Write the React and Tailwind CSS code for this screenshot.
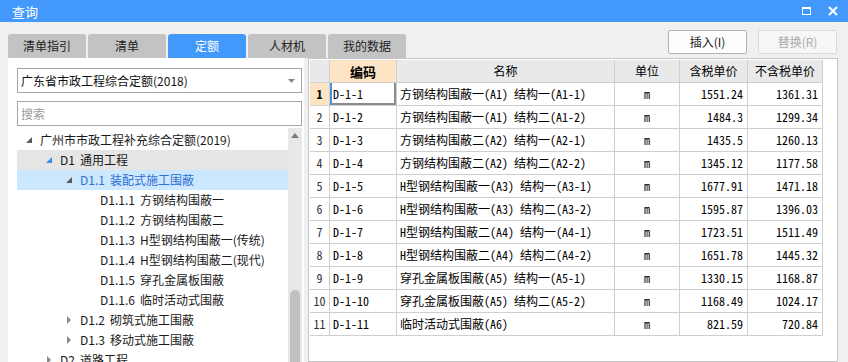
import React from 'react';

const treeItems = [
  { level: 0, arrow: 'open', label: '广州市市政工程补充综合定额(2019)' },
  { level: 1, arrow: 'open', code: 'D1', label: '通用工程', hover: true },
  { level: 2, arrow: 'open', code: 'D1.1', label: '装配式施工围蔽', selected: true },
  { level: 3, code: 'D1.1.1', label: '方钢结构围蔽一' },
  { level: 3, code: 'D1.1.2', label: '方钢结构围蔽二' },
  { level: 3, code: 'D1.1.3', label: 'H型钢结构围蔽一(传统)' },
  { level: 3, code: 'D1.1.4', label: 'H型钢结构围蔽二(现代)' },
  { level: 3, code: 'D1.1.5', label: '穿孔金属板围蔽' },
  { level: 3, code: 'D1.1.6', label: '临时活动式围蔽' },
  { level: 2, arrow: 'closed', code: 'D1.2', label: '砌筑式施工围蔽' },
  { level: 2, arrow: 'closed', code: 'D1.3', label: '移动式施工围蔽' },
  { level: 1, arrow: 'closed', code: 'D2', label: '道路工程' },
];

const rows = [
  ['D-1-1', '方钢结构围蔽一(A1) 结构一(A1-1)', '1551.24', '1361.31'],
  ['D-1-2', '方钢结构围蔽一(A1) 结构二(A1-2)', '1484.3', '1299.34'],
  ['D-1-3', '方钢结构围蔽二(A2) 结构一(A2-1)', '1435.5', '1260.13'],
  ['D-1-4', '方钢结构围蔽二(A2) 结构二(A2-2)', '1345.12', '1177.58'],
  ['D-1-5', 'H型钢结构围蔽一(A3) 结构一(A3-1)', '1677.91', '1471.18'],
  ['D-1-6', 'H型钢结构围蔽一(A3) 结构二(A3-2)', '1595.87', '1396.03'],
  ['D-1-7', 'H型钢结构围蔽二(A4) 结构一(A4-1)', '1723.51', '1511.49'],
  ['D-1-8', 'H型钢结构围蔽二(A4) 结构二(A4-2)', '1651.78', '1445.32'],
  ['D-1-9', '穿孔金属板围蔽(A5) 结构一(A5-1)', '1330.15', '1168.87'],
  ['D-1-10', '穿孔金属板围蔽(A5) 结构二(A5-2)', '1168.49', '1024.17'],
  ['D-1-11', '临时活动式围蔽(A6)', '821.59', '720.84'],
];

const tabs = ['清单指引', '清单', '定额', '人材机', '我的数据'];

const Arrow = ({ type, hover }) => {
  if (type === 'open') {
    return (
      <svg width="6" height="6" viewBox="0 0 6 6" className="shrink-0">
        <polygon points="6,0 6,6 0,6" fill={hover ? '#3a8ee6' : '#5c5c5c'} />
      </svg>
    );
  }
  if (type === 'closed') {
    return (
      <svg width="6" height="8" viewBox="0 0 6 8" className="shrink-0">
        <polygon points="1,0 5,4 1,8" fill="#8a8a8a" />
      </svg>
    );
  }
  return null;
};

const TreeRow = ({ item }) => {
  const pad = 9 + item.level * 20;
  return (
    <div
      className={`h-[20px] shrink-0 flex items-center whitespace-nowrap ${
        item.selected ? 'bg-[#cce8ff] text-[#2f6fd0]' : item.hover ? 'bg-[#e5e5e5] text-[#1a1a1a]' : 'text-[#1a1a1a]'
      }`}
      style={{ paddingLeft: item.arrow ? pad : pad + 14 }}
    >
      {item.arrow && (
        <span className="w-[14px] flex items-center">
          <Arrow type={item.arrow} hover={item.hover} />
        </span>
      )}
      <span className="flex gap-[5px]">
        {item.code && <span>{item.code}</span>}
        <span>{item.label}</span>
      </span>
    </div>
  );
};

const mono = 'font-["Noto_Sans_Mono_CJK_SC","Noto_Sans_CJK_SC",monospace] font-light';

export default function App() {
  return (
    <div className='w-[848px] h-[362px] overflow-hidden bg-[#f0f0f0] flex flex-col font-["Noto_Sans_CJK_SC","Noto_Sans",sans-serif] text-[12px] leading-none'>
      {/* Title bar */}
      <div className="h-[22px] shrink-0 bg-[#4299fb] flex items-center justify-between pl-[12px] pr-[10px]">
        <span className="text-white text-[13px]">查询</span>
        <div className="flex items-center gap-[17px]">
          <div className="w-[9px] h-[8px] border border-white border-t-2" />
          <svg width="10" height="10" viewBox="0 0 10 10">
            <path d="M1 1 L9 9 M9 1 L1 9" stroke="white" strokeWidth="2" />
          </svg>
        </div>
      </div>

      <div className="flex-1 flex flex-col pl-[8px] pr-[10px] min-h-0">
        {/* Tabs and buttons */}
        <div className="h-[36px] shrink-0 flex justify-between">
          <div className="flex gap-[2px] mt-[12px]">
            {tabs.map((t) => (
              <div
                key={t}
                className={`w-[78px] h-[24px] rounded-t-[3px] flex items-center justify-center text-[12px] ${
                  t === '定额' ? 'bg-[#4299fb] text-white' : 'bg-[#c3c3c3] text-[#222]'
                }`}
              >
                {t}
              </div>
            ))}
          </div>
          <div className="flex gap-[11px] mt-[8px] pr-[1px]">
            <button className="w-[79px] h-[24px] bg-[#fdfdfd] border border-[#b4b4b4] rounded-[2px] text-[#222]">插入(I)</button>
            <button className="w-[79px] h-[24px] bg-[#f6f6f6] border border-[#dadada] rounded-[2px] text-[#ababab]">替换(R)</button>
          </div>
        </div>

        {/* Content */}
        <div className="flex-1 flex gap-[4px] min-h-0">
          {/* Left panel */}
          <div className="w-[296px] bg-white flex flex-col pl-[9px] pr-[2px] pt-[10px] min-h-0">
            <div className="h-[25px] shrink-0 border border-[#a6a6a6] flex items-center justify-between pl-[3px] pr-[6px] text-[#111]">
              <span>广东省市政工程综合定额(2018)</span>
              <svg width="7" height="4" viewBox="0 0 7 4">
                <polygon points="0,0 7,0 3.5,4" fill="#888" />
              </svg>
            </div>
            <div className="h-[25px] shrink-0 mt-[8px] border border-[#a6a6a6] flex items-center pl-[3px] text-[#9a9a9a]">搜索</div>
            <div className="flex-1 flex min-h-0 mt-[2px] overflow-hidden">
              <div className="flex-1 flex flex-col pt-[2px]">
                {treeItems.map((item) => (
                  <TreeRow key={item.label} item={item} />
                ))}
              </div>
              <div className="w-[14px] bg-[#e8e8e8] flex flex-col items-center">
                <svg width="8" height="5" viewBox="0 0 8 5" className="mt-[5px] shrink-0">
                  <polygon points="0,5 8,5 4,0" fill="#7d7d7d" />
                </svg>
                <div className="h-[152px] shrink-0" />
                <div className="w-[10px] h-[120px] shrink-0 rounded-full bg-[#c1c1c1]" />
              </div>
            </div>
          </div>

          {/* Right panel */}
          <div className="w-[530px] bg-white border border-[#c6c6c6] p-[1px] min-h-0 overflow-hidden">
            <div className="grid grid-cols-[20px_67px_218px_65px_68px_75px] auto-rows-[23px] w-max text-black">
              <div className="bg-[#e9e9e9] border-r border-b border-[#cfcfcf]" />
              <div className="bg-[#fde4c5] border-r border-b border-[#cfcfcf] flex items-center justify-center font-bold text-[13px]">编码</div>
              <div className="bg-[#e9e9e9] border-r border-b border-[#cfcfcf] flex items-center justify-center">名称</div>
              <div className="bg-[#e9e9e9] border-r border-b border-[#cfcfcf] flex items-center justify-center">单位</div>
              <div className="bg-[#e9e9e9] border-r border-b border-[#cfcfcf] flex items-center justify-center">含税单价</div>
              <div className="bg-[#e9e9e9] border-r border-b border-[#cfcfcf] flex items-center justify-center">不含税单价</div>
              {rows.map((r, i) => (
                <React.Fragment key={r[0]}>
                  <div
                    className={`${mono} border-r border-b border-[#cfcfcf] flex items-center justify-center ${
                      i === 0 ? 'bg-[#fde4c5] !font-bold' : 'text-[#333]'
                    }`}
                  >
                    {i + 1}
                  </div>
                  <div
                    className={`${mono} border-r border-b border-[#cfcfcf] flex items-center pl-[3px] ${
                      i === 0 ? 'shadow-[inset_2px_0_0_#4a90e2,inset_-2px_-2px_0_#8c8c8c]' : ''
                    }`}
                  >
                    {r[0]}
                  </div>
                  <div className={`${mono} border-r border-b border-[#cfcfcf] flex items-center pl-[3px] whitespace-nowrap overflow-hidden`}>{r[1]}</div>
                  <div className={`${mono} border-r border-b border-[#cfcfcf] flex items-center justify-center`}>m</div>
                  <div className={`${mono} border-r border-b border-[#cfcfcf] flex items-center justify-end pr-[4px]`}>{r[2]}</div>
                  <div className={`${mono} border-r border-b border-[#cfcfcf] flex items-center justify-end pr-[4px]`}>{r[3]}</div>
                </React.Fragment>
              ))}
            </div>
          </div>
        </div>
      </div>
    </div>
  );
}
